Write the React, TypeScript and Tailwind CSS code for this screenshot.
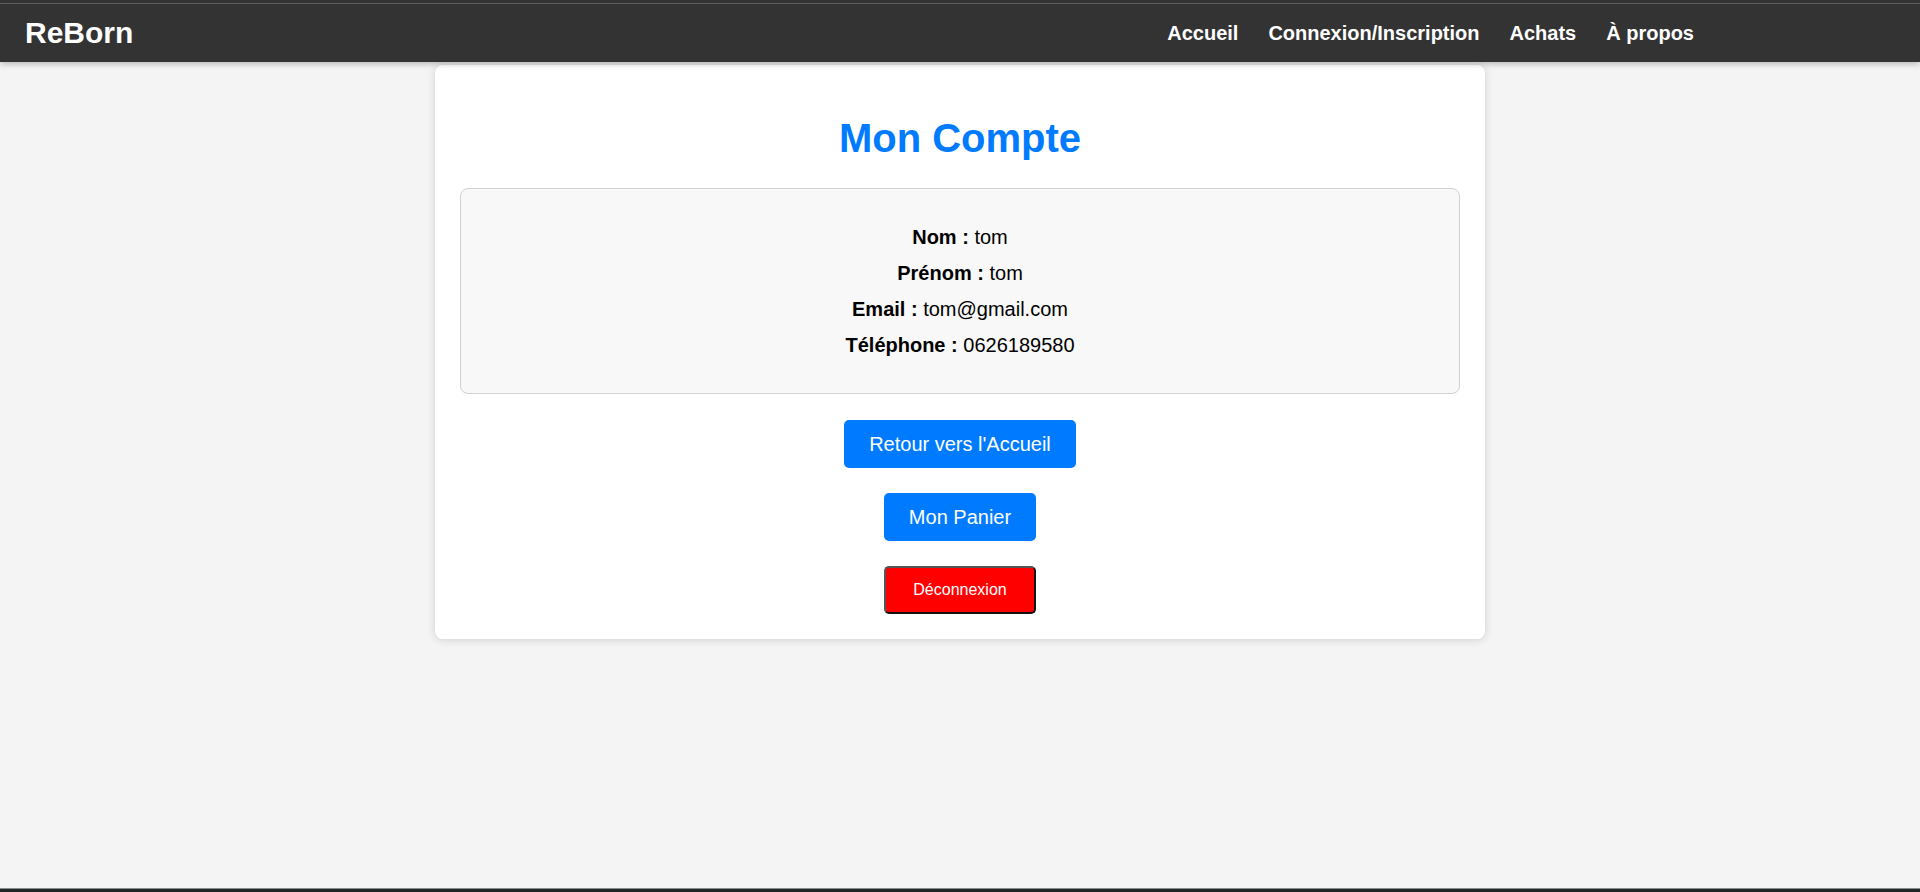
import React from "react";

export default function App() {
  const font = { fontFamily: '"Liberation Sans", Arial, sans-serif' };
  return (
    <div className="flex h-[892px] flex-col bg-[#f4f4f4] text-black" style={font}>
      <header className="relative z-10 flex flex-col bg-[#333333] shadow-[0_2px_6px_rgba(0,0,0,0.25)]">
        <div className="h-[3px]" />
        <div className="h-px bg-[#5e5e5e]" />
        <div className="flex h-[58px] items-center justify-between pl-[25px] pr-[226px]">
          <div className="text-[30px] font-bold leading-none text-white">ReBorn</div>
          <nav className="flex items-center gap-[30px] text-[20px] font-bold text-white">
            <a>Accueil</a>
            <a>Connexion/Inscription</a>
            <a>Achats</a>
            <a>À propos</a>
          </nav>
        </div>
      </header>
      <main className="flex-1 pt-[3px]">
        <div className="mx-auto flex w-[1050px] flex-col items-center rounded-[8px] bg-white px-[25px] pb-[25px] pt-[50px] shadow-[0_1px_8px_rgba(0,0,0,0.15)]">
          <h1 className="text-[40px] font-bold leading-[46px] text-[#007bff]">Mon Compte</h1>
          <div className="mt-[27px] w-full rounded-[8px] border border-[#d2d2d2] bg-[#f8f8f8] py-[30px] text-center text-[20px] leading-[36px]">
            <p><strong>Nom :</strong> tom</p>
            <p><strong>Prénom :</strong> tom</p>
            <p><strong>Email :</strong> tom@gmail.com</p>
            <p><strong>Téléphone :</strong> 0626189580</p>
          </div>
          <button className="mt-[26px] h-[48px] rounded-[5px] bg-[#007bff] px-[25px] text-[20px] text-white">
            Retour vers l'Accueil
          </button>
          <button className="mt-[25px] h-[48px] rounded-[5px] bg-[#007bff] px-[25px] text-[20px] text-white">
            Mon Panier
          </button>
          <button className="mt-[25px] h-[48px] w-[152px] rounded-[5px] border-2 border-t-[#555555] border-l-[#555555] border-b-[#111111] border-r-[#111111] bg-[#ff0000] text-[16px] text-white">
            Déconnexion
          </button>
        </div>
      </main>
      <footer className="flex flex-col">
        <div className="h-px bg-[#8c8c8c]" />
        <div className="h-[3px] bg-[#1e2626]" />
      </footer>
    </div>
  );
}
